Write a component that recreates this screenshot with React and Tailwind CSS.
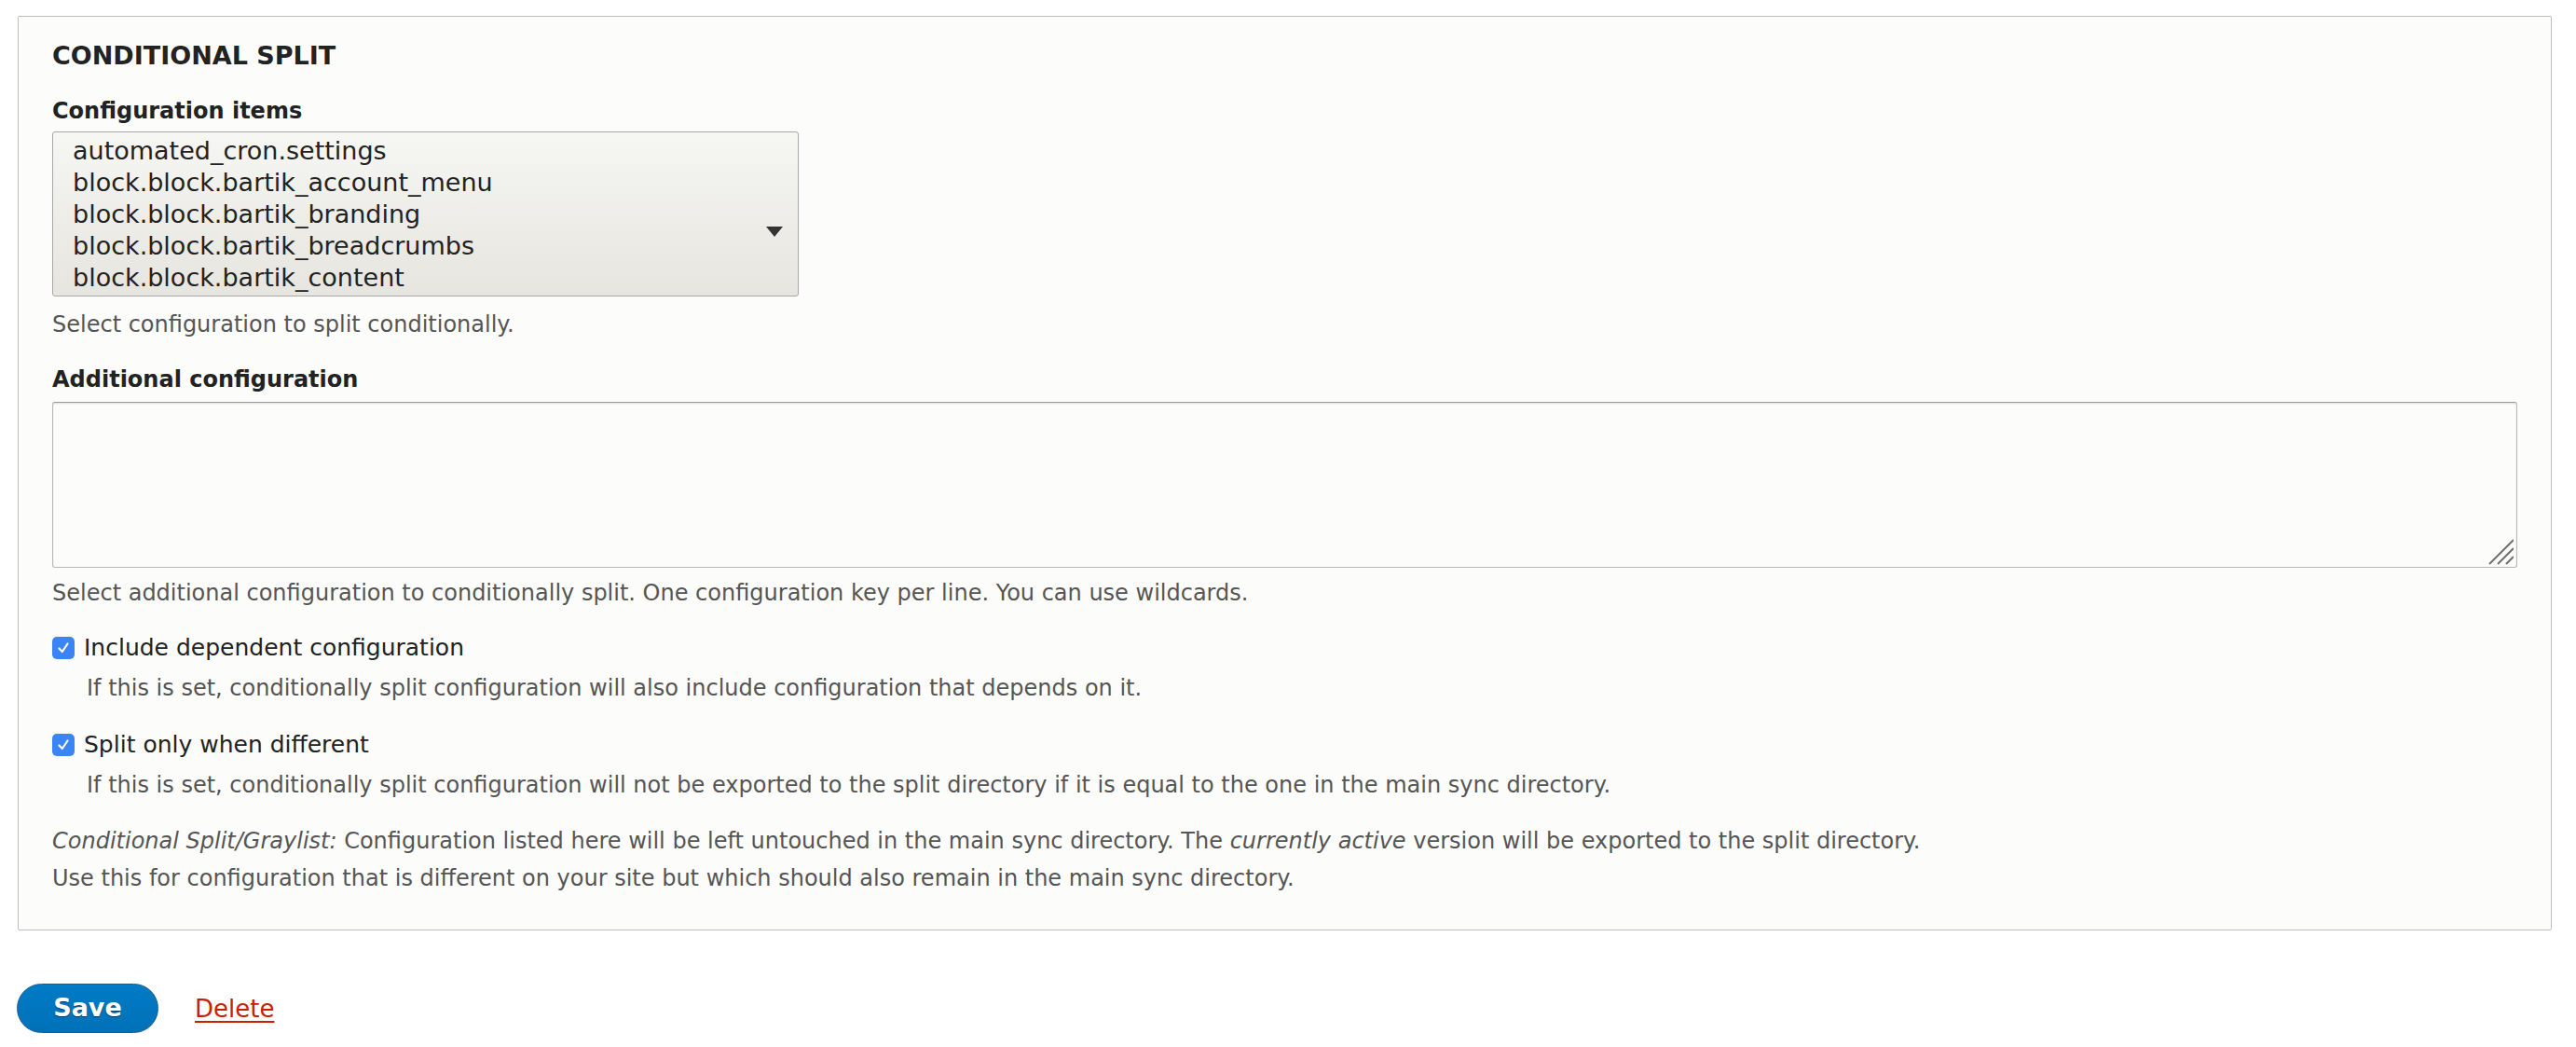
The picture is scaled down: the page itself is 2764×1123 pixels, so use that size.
import React from "react";

const options = [
  "automated_cron.settings",
  "block.block.bartik_account_menu",
  "block.block.bartik_branding",
  "block.block.bartik_breadcrumbs",
  "block.block.bartik_content",
];

function Checkbox() {
  return (
    <span className="flex h-[24px] w-[24px] shrink-0 items-center justify-center rounded-[5px] bg-[#3a84f6]">
      <svg width="14" height="14" viewBox="0 0 14 14" fill="none">
        <path d="M2.5 7.5 L5.8 11 L11.5 2.5" stroke="#fff" strokeWidth="2.2" strokeLinecap="round" strokeLinejoin="round" />
      </svg>
    </span>
  );
}

function CheckRow({ label, description, className }) {
  return (
    <div className={className}>
      <label className="flex items-center gap-[10px] text-[25px] leading-[30px] text-[#222]">
        <Checkbox />
        <span>{label}</span>
      </label>
      <p className="ml-[37px] mt-[13px] text-[24px] leading-[30px] text-[#555]">{description}</p>
    </div>
  );
}

export default function App() {
  return (
    <div className="min-h-[1123px] bg-white pt-[17px] font-['DejaVu_Sans',sans-serif]">
      <section className="ml-[19px] mr-[26px] rounded-[2px] border border-[#bfbfbf] bg-[#fcfcfa] px-[36px] pt-[26px] pb-[35px]">
        <h2 className="text-[27px] font-bold uppercase leading-[32px] text-[#222]">Conditional split</h2>

        <div className="mt-[28px] text-[24px] font-bold leading-[30px] text-[#222]">Configuration items</div>
        <div className="relative mt-[7px] h-[177px] w-[801px] rounded-[3px] border border-[#a8a8a8] bg-gradient-to-b from-[#f6f6f3] to-[#e6e5df] pl-[21px] pt-[3px]">
          {options.map((o) => (
            <div key={o} className="text-[27px] leading-[34px] text-[#222]">
              {o}
            </div>
          ))}
          <svg className="absolute right-[16px] top-[101px]" width="18" height="12" viewBox="0 0 18 12">
            <path d="M0 0 H18 L9 11 Z" fill="#333" />
          </svg>
        </div>
        <p className="mt-[15px] text-[24px] leading-[30px] text-[#555]">Select configuration to split conditionally.</p>

        <div className="mt-[29px] text-[24px] font-bold leading-[30px] text-[#222]">Additional configuration</div>
        <div className="relative mt-[9px] h-[178px] w-full">
          <textarea className="block h-full w-full resize-none rounded-[3px] border border-[#b8b8b8] border-t-[#9a9a9a] bg-[#fcfcfa] shadow-[inset_0_1px_2px_rgba(0,0,0,0.12)] outline-none" />
          <svg className="pointer-events-none absolute bottom-[3px] right-[4px]" width="28" height="28" viewBox="0 0 28 28">
            <path d="M2 27 L28 1 M11 27 L28 10 M20 27 L28 19" stroke="#707070" strokeWidth="2" />
          </svg>
        </div>
        <p className="mt-[12px] text-[24px] leading-[30px] text-[#555]">
          Select additional configuration to conditionally split. One configuration key per line. You can use wildcards.
        </p>

        <CheckRow
          className="mt-[29px]"
          label="Include dependent configuration"
          description="If this is set, conditionally split configuration will also include configuration that depends on it."
        />
        <CheckRow
          className="mt-[31px]"
          label="Split only when different"
          description="If this is set, conditionally split configuration will not be exported to the split directory if it is equal to the one in the main sync directory."
        />

        <p className="mt-[25px] text-[24px] leading-[40px] text-[#555]">
          <em>Conditional Split/Graylist:</em> Configuration listed here will be left untouched in the main sync directory. The{" "}
          <em>currently active</em> version will be exported to the split directory.
          <br />
          Use this for configuration that is different on your site but which should also remain in the main sync directory.
        </p>
      </section>

      <div className="ml-[18px] mt-[57px] flex items-center gap-[39px]">
        <button className="h-[53px] w-[152px] rounded-full border border-[#1e5c90] bg-gradient-to-b from-[#007bc6] to-[#0071b8] text-[27px] font-bold text-white [text-shadow:0_1px_1px_rgba(0,0,0,0.5)]">
          Save
        </button>
        <a href="#" className="text-[26px] leading-[30px] text-[#c72100] underline decoration-2 underline-offset-[4px]">
          Delete
        </a>
      </div>
    </div>
  );
}
